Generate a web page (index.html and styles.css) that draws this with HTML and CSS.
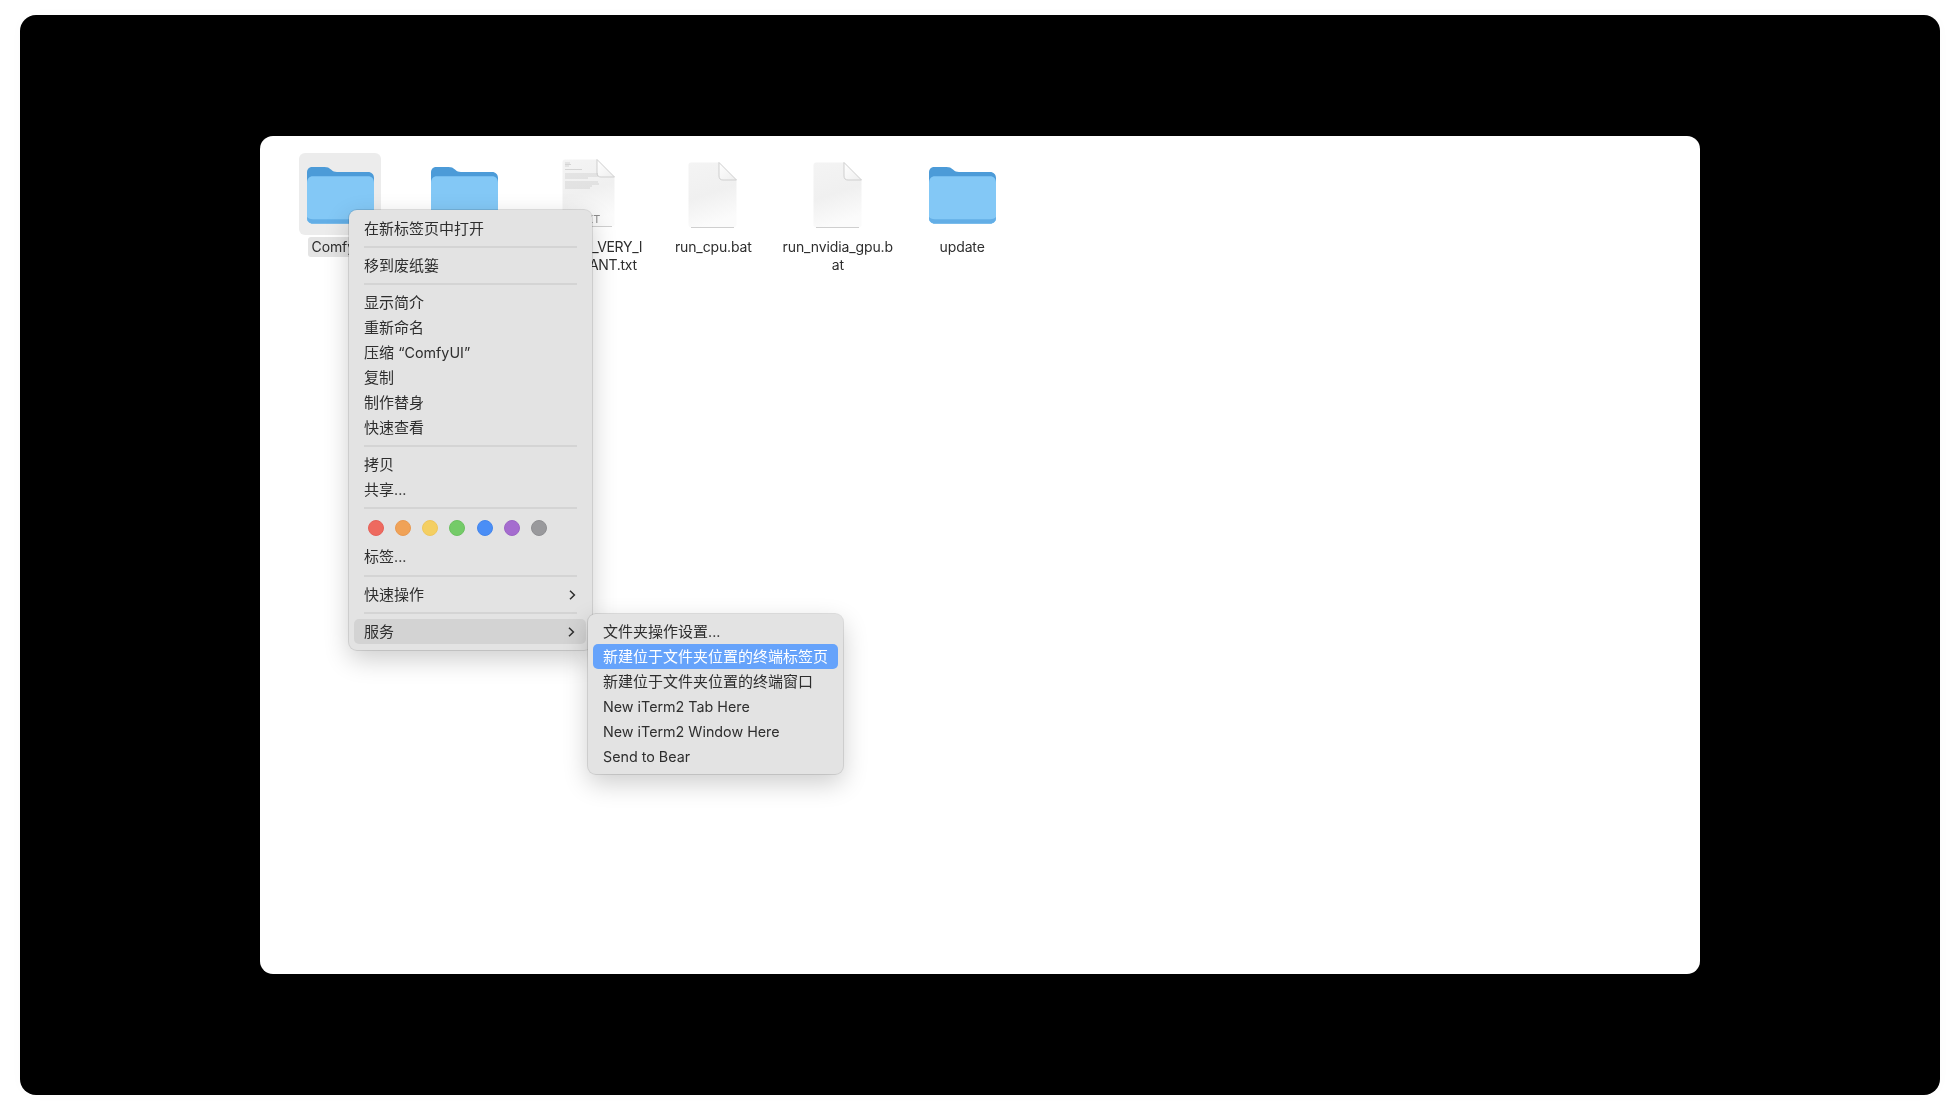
FILE: index.html
```html
<!DOCTYPE html>
<html lang="zh-CN">
<head>
<meta charset="utf-8">
<title>ComfyUI</title>
<link rel="stylesheet" href="styles.css">
</head>
<body>
<svg class="defs" width="0" height="0" aria-hidden="true">
  <defs>
    <linearGradient id="paper" x1="0" y1="0" x2="0.25" y2="1">
      <stop offset="0" stop-color="#f4f4f4"/>
      <stop offset="0.55" stop-color="#f0f0f0"/>
      <stop offset="1" stop-color="#fbfbfb"/>
    </linearGradient>
    <linearGradient id="fold" x1="0" y1="0" x2="1" y2="1">
      <stop offset="0" stop-color="#ffffff"/>
      <stop offset="1" stop-color="#eeeeee"/>
    </linearGradient>
    <symbol id="folder" viewBox="0 0 67 58">
      <path d="M0 6.5C0 2.8 2.4 1 5.5 1H17.5C20.5 1 22 1.8 24 3.6C26 5.4 27.5 6 30 6H61C64.6 6 67 8.4 67 12V52C67 55.4 64.6 57.5 61 57.5H6C2.4 57.5 0 55.4 0 52Z" fill="#4c9bd8"/>
      <path d="M0 17C0 12.8 2.2 10.3 6 10.3H61C64.8 10.3 67 12.8 67 17V52C67 55.6 64.8 57.5 61 57.5H6C2.2 57.5 0 55.6 0 52Z" fill="#83c8f6"/>
      <path d="M0 51.5C0 54.8 2.4 57.5 6 57.5H61C64.6 57.5 67 54.8 67 51.5V50.8C66.4 52.4 64.2 53.3 61 53.3H6C2.8 53.3 0.6 52.4 0 50.8Z" fill="#63aee6"/>
    </symbol>
    <symbol id="doc" viewBox="0 0 49 66">
      <path d="M3 0.5H31L48.5 18V63C48.5 64.6 47.4 65.5 46 65.5H3C1.6 65.5 0.5 64.6 0.5 63V3C0.5 1.4 1.6 0.5 3 0.5Z" fill="url(#paper)"/>
      <path d="M31 0.5V14C31 16.6 32.4 18 35 18H48.5Z" fill="url(#fold)" stroke="#cfcfcf" stroke-width="1"/>
      <path d="M3 65.5H46" stroke="#cfcfcf" stroke-width="1"/>
    </symbol>
  </defs>
</svg>
<main class="frame">
  <section class="finder">
    <ul class="grid">
      <li class="file file-selected">
        <div class="thumb"><svg class="icon-folder"><use href="#folder"/></svg></div>
        <span class="name name-selected">ComfyUI</span>
      </li>
      <li class="file">
        <div class="thumb"><svg class="icon-folder"><use href="#folder"/></svg></div>
        <span class="name">input</span>
      </li>
      <li class="file">
        <div class="thumb">
          <svg class="icon-text" viewBox="0 0 53 68">
            <path d="M3 0.5H35L52.5 18V65C52.5 66.6 51.4 67.5 50 67.5H3C1.6 67.5 0.5 66.6 0.5 65V3C0.5 1.4 1.6 0.5 3 0.5Z" fill="url(#paper)"/>
            <path d="M35 0.5V14C35 16.6 36.4 18 39 18H52.5Z" fill="url(#fold)" stroke="#cfcfcf"/>
            <path d="M3 67.5H50" stroke="#cfcfcf"/>
            <g class="doc-lines">
              <path d="M3 4H8M3 5.5H9M3 7H7M3 10.5H20"/>
              <path d="M3 15H36M3 17H36M3 19H26"/>
              <path d="M3 23H36M3 25H37M3 27H30M3 29H28"/>
            </g>
          </svg>
          <span class="txt-tag">TXT</span>
        </div>
        <span class="name name-long">README_VERY_I<br>MPORTANT.txt</span>
      </li>
      <li class="file">
        <div class="thumb"><svg class="icon-doc"><use href="#doc"/></svg></div>
        <span class="name">run_cpu.bat</span>
      </li>
      <li class="file">
        <div class="thumb"><svg class="icon-doc"><use href="#doc"/></svg></div>
        <span class="name">run_nvidia_gpu.b<br>at</span>
      </li>
      <li class="file">
        <div class="thumb"><svg class="icon-folder"><use href="#folder"/></svg></div>
        <span class="name">update</span>
      </li>
    </ul>

    <div class="menu menu-main">
      <div class="row">在新标签页中打开</div>
      <div class="sep"></div>
      <div class="row">移到废纸篓</div>
      <div class="sep"></div>
      <div class="row">显示简介</div>
      <div class="row">重新命名</div>
      <div class="row"><span>压缩 <span class="latin">“ComfyUI”</span></span></div>
      <div class="row">复制</div>
      <div class="row">制作替身</div>
      <div class="row">快速查看</div>
      <div class="sep"></div>
      <div class="row">拷贝</div>
      <div class="row"><span>共享<span class="latin">...</span></span></div>
      <div class="sep"></div>
      <div class="dots">
        <i class="dot dot-red"></i>
        <i class="dot dot-orange"></i>
        <i class="dot dot-yellow"></i>
        <i class="dot dot-green"></i>
        <i class="dot dot-blue"></i>
        <i class="dot dot-purple"></i>
        <i class="dot dot-gray"></i>
      </div>
      <div class="row"><span>标签<span class="latin">...</span></span></div>
      <div class="sep sep-tag"></div>
      <div class="row row-sub">快速操作
        <svg class="chev" viewBox="0 0 7 10"><path d="M1 0.8L5.4 5L1 9.2"/></svg>
      </div>
      <div class="sep"></div>
      <div class="row row-sub row-open">服务
        <svg class="chev" viewBox="0 0 7 10"><path d="M1 0.8L5.4 5L1 9.2"/></svg>
      </div>
    </div>

    <div class="menu menu-sub">
      <div class="row"><span>文件夹操作设置<span class="latin">...</span></span></div>
      <div class="row row-active">新建位于文件夹位置的终端标签页</div>
      <div class="row">新建位于文件夹位置的终端窗口</div>
      <div class="row row-latin"><span class="latin">New iTerm2 Tab Here</span></div>
      <div class="row row-latin"><span class="latin">New iTerm2 Window Here</span></div>
      <div class="row row-latin"><span class="latin">Send to Bear</span></div>
    </div>
  </section>
</main>
</body>
</html>
```
FILE: styles.css
```css
* { box-sizing: border-box; }

html, body {
  margin: 0;
  height: 100%;
  background: #fff;
}

body {
  width: 1960px;
  height: 1120px;
  overflow: hidden;
  padding: 15px 20px 25px;
  font-family: Inter, "Noto Sans CJK SC", sans-serif;
  color: #2e2e2e;
}

.defs { position: absolute; }

.frame {
  width: 1920px;
  height: 1080px;
  background: #000;
  border-radius: 16px;
  padding: 121px 240px;
  box-shadow: 0 0 14px rgba(0, 0, 0, 0.02);
}

.finder {
  position: relative;
  width: 1440px;
  height: 838px;
  background: #fff;
  border-radius: 13px;
  filter: blur(0.4px);
}

.grid {
  display: flex;
  margin: 0;
  padding: 17px 0 0 18px;
  list-style: none;
}

.file {
  display: flex;
  flex-direction: column;
  align-items: center;
  width: 124.4px;
}

.thumb {
  position: relative;
  display: flex;
  align-items: center;
  justify-content: center;
  width: 82px;
  height: 82px;
  border-radius: 6px;
}

.file-selected .thumb { background: #ececec; }

.icon-folder { width: 67px; height: 58px; margin-top: 1px; }
.icon-doc { width: 49px; height: 66px; margin: 2px 1px 0 0; }
.icon-text { width: 53px; height: 68px; margin-top: -2px; }

.doc-lines path {
  fill: none;
  stroke: #b4b4b4;
  stroke-width: 0.5;
}

.txt-tag {
  position: absolute;
  left: 1px;
  right: 0;
  bottom: 9px;
  text-align: center;
  font-size: 11px;
  line-height: 13px;
  letter-spacing: 0.5px;
  color: #8c8c8c;
}

.name {
  margin-top: 2px;
  padding: 1px 4px;
  border-radius: 3px;
  font-size: 14px;
  line-height: 18px;
  letter-spacing: -0.12px;
  text-align: center;
  white-space: nowrap;
}

.name-long { letter-spacing: -0.3px; }

.name-selected { background: #e4e4e4; }

.menu {
  position: absolute;
  padding: 6px 5px 6px;
  background: #e3e3e3;
  border-radius: 8px;
  box-shadow: 0 0 0 1px rgba(0, 0, 0, 0.11), 0 9px 26px rgba(0, 0, 0, 0.2);
  font-size: 15px;
}

.menu-main { left: 89px; top: 74px; width: 243px; }
.menu-sub { left: 328px; top: 478px; width: 255px; padding: 5px 5px 5px; }

.row {
  display: flex;
  align-items: center;
  justify-content: space-between;
  height: 25px;
  padding: 0 10px 2px;
  border-radius: 5px;
  white-space: nowrap;
}

.row-latin { padding-bottom: 0; }

.latin { font-size: 14.3px; }

.row-open { background: #d3d3d3; margin-right: 1px; }

.row-active {
  background: #66a3fb;
  color: #fff;
}

.sep {
  height: 2px;
  margin: 5px 10px;
  background: #d4d4d4;
}

.sep-tag { margin-top: 6px; }

.dots {
  display: flex;
  gap: 11.1px;
  height: 30px;
  padding: 5.5px 0 0 14.2px;
}

.dot {
  width: 16px;
  height: 16px;
  border-radius: 50%;
  border: 1px solid;
}

.dot-red { background: #ee6a5f; border-color: #e5625a; }
.dot-orange { background: #f0a257; border-color: #e99a52; }
.dot-yellow { background: #f4cf62; border-color: #efc75c; }
.dot-green { background: #74cb68; border-color: #6cc161; }
.dot-blue { background: #4a8ef6; border-color: #4486ec; }
.dot-purple { background: #a56ccf; border-color: #9c65c5; }
.dot-gray { background: #99999c; border-color: #8f8f92; }

.chev {
  width: 7px;
  height: 10px;
  margin: 2px 1px 0 0;
  fill: none;
  stroke: #2e2e2e;
  stroke-width: 1.5;
}
```
